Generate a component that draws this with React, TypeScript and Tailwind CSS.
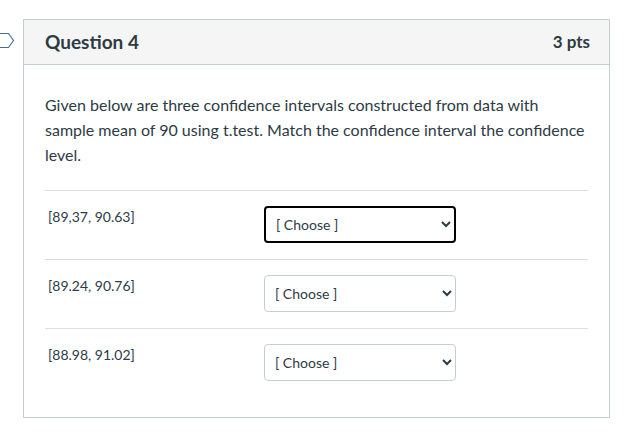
import React from 'react';

const rows = ['[89,37, 90.63]', '[89.24, 90.76]', '[88.98, 91.02]'];

function Marker() {
  return (
    <svg className="absolute left-[-24px] top-[12px]" width="15" height="17" viewBox="0 0 15 17">
      <path d="M-2 1.5 H8.5 L13.5 8.5 L8.5 15.5 H-2" fill="none" stroke="#4a6f8e" strokeWidth="1.2" />
    </svg>
  );
}

export default function App() {
  return (
    <div className="w-[634px] h-[447px] bg-white pl-[23px] pt-[19px] text-[#2d3b45]" style={{ fontFamily: 'Lato, "Liberation Sans", sans-serif' }}>
      <div className="relative w-[587px] border border-[#c7cdd1]">
        <Marker />
        <div className="flex h-[45px] items-center justify-between border-b border-[#c7cdd1] bg-[#f5f5f5] pl-[21px] pr-[19px]">
          <span className="text-[19px] font-bold text-[#2d3b45]">Question 4</span>
          <span className="text-[17px] font-bold text-[#2d3b45]">3 pts</span>
        </div>
        <div className="px-[21px] pb-[20px] pt-[27px]">
          <p className="mb-[23px] text-[16px] leading-[25px]">
            Given below are three confidence intervals constructed from data with sample mean of 90 using t.test. Match the confidence interval the confidence level.
          </p>
          {rows.map((r, i) => (
            <div key={r} className="flex items-start border-t border-[#dcdfe2] pt-[15px] pb-[16px]">
              <div className="w-[219px] pl-[3px] pt-[1px] text-[14px] leading-[20px]">{r}</div>
              <select
                defaultValue=""
                className={`h-[37px] w-[192px] rounded-[4px] bg-white pl-[6px] pr-[4px] text-[14px] text-[#2d3b45] ${
                  i === 0 ? 'border-2 border-black' : 'border border-[#c7cdd1]'
                }`}
                style={{ fontFamily: 'Lato, "Liberation Sans", sans-serif' }}
              >
                <option value="">[ Choose ]</option>
                <option value="90">90%</option>
                <option value="95">95%</option>
                <option value="99">99%</option>
              </select>
            </div>
          ))}
        </div>
      </div>
    </div>
  );
}
